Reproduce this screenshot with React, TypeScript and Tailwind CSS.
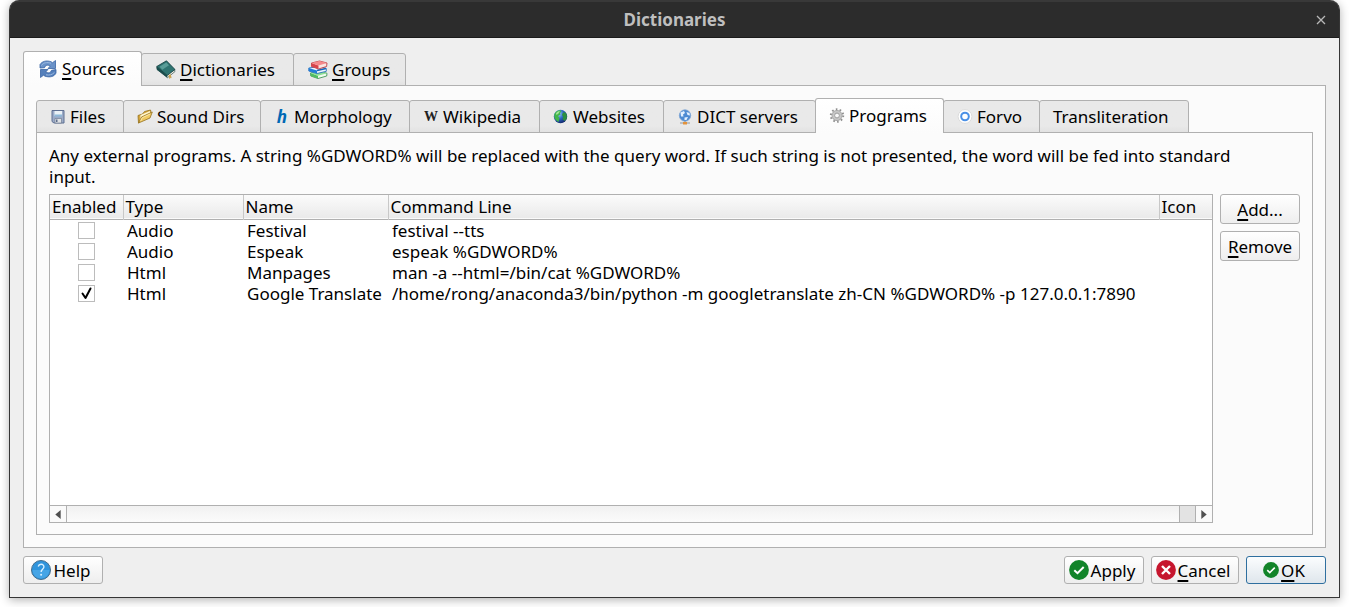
import React, { useState } from 'react';
import clsx from 'clsx';

interface TabItem {
  id: string;
  label: string;
  width: string;
  icon?: React.ReactNode;
  accessKey?: boolean;
}

interface Program {
  enabled: boolean;
  type: string;
  name: string;
  command: string;
}

const SyncIcon = () => (
  <svg viewBox="0 0 20 20" className="w-5 h-5 shrink-0" aria-hidden="true">
    <path d="M2 9V5.500C4 2.500 8 1 13 2.700l1.500 1L17.500 1.500V9.500H10L12.300 7C9.500 5.500 7.500 6 6.500 8.700Z" fill="#6a92c8" stroke="#3a65a5" strokeWidth=".8" />
    <path d="M18 10.500V14c-1.500 3.500-6 4.800-11 3.200l-1.500-1-3 2.300v-8H10L7.700 13c2.800 1.500 4.800 1 5.800-1.700Z" fill="#5580bb" stroke="#3a65a5" strokeWidth=".8" />
    <path d="M3.500 6.500C5.500 3.500 9 3 13 4.200M8 15.800c3 .7 6.500 0 8.500-2.500" fill="none" stroke="#9dbbe2" />
  </svg>
);

const BookIcon = () => (
  <svg viewBox="0 0 20 20" className="w-5 h-5 shrink-0" aria-hidden="true">
    <path d="M.7 7 1 9.500l10.500 8.200 7.500-6.200-.5-2-8 5Z" fill="#f1eee2" stroke="#32504f" strokeWidth=".7" />
    <path d="M.7 6.500 10.500.8 19 9.500l-7.800 6Z" fill="#2f7471" stroke="#123c3d" strokeWidth=".8" />
    <path d="M3.500 6.800 10.300 2.500 13 5.300l-6.700 4.500Z" fill="#5a9d98" />
    <path d="M.7 6.500 1 9.700l10.300 8V15.500Z" fill="#174c4c" />
    <path d="m12.500 15.500 1 3.500 1.200-1.200.9.500-.8-4Z" fill="#c9a14e" />
  </svg>
);

const BooksIcon = () => (
  <svg viewBox="0 0 20 20" className="w-5 h-5 shrink-0" aria-hidden="true">
    <path d="M2.500 13 12 11l7 2.300-.3 2.700-8.700 2.500L2.800 16Z" fill="#effbed" stroke="#2d8a45" strokeWidth=".8" />
    <path d="m2.500 13 7.500 2.800v2.700L2.800 16Z" fill="#4fbd62" />
    <path d="M2.500 13 12 11l7 2.300-9 2.500Z" fill="#8ddf94" />
    <path d="m.8 8 10-1.500 7.500 2v2.800L9 13.500.8 11Z" fill="#edf5ff" stroke="#1764b5" strokeWidth=".8" />
    <path d="m.8 8 8.200 2.500v3L.8 11Z" fill="#217dd8" />
    <path d="m9 10.500 9-2" stroke="#1764b5" strokeWidth="1.500" />
    <path d="m3.500 3 8-2 7.500 2-.4 3.500L10.500 9 3.500 6.500Z" fill="#f9e6e2" stroke="#b92830" strokeWidth=".8" />
    <path d="m3.500 3 7 2.500V9l-7-2.500Z" fill="#d8444b" />
    <path d="m3.500 3 8-2 7.500 2-8.500 2.500Z" fill="#f4898a" />
  </svg>
);

const FloppyIcon = () => (
  <svg viewBox="0 0 16 16" className="w-4 h-4 shrink-0" aria-hidden="true">
    <path d="M2 1.500h12v12.500H4L2 12.500Z" fill="#9cabc8" stroke="#5f7092" />
    <path d="M4.500 2h7.500v5h-7.500Z" fill="#eaf1f6" />
    <path d="M4.500 5.500H12V7.500H4.500Z" fill="#8fb9d8" />
    <path d="M5 9.500h6.500V14H5Z" fill="#dfe2e5" stroke="#66738a" strokeWidth=".6" />
    <path d="M6 10.500h1.500v2.500H6Z" fill="#5d6d8b" />
  </svg>
);

const FolderIcon = () => (
  <svg viewBox="0 0 16 16" className="w-4 h-4 shrink-0" aria-hidden="true">
    <path d="M1.500 14 1 6.500 5.500 5l2-2.500 6-1.500.5 2Z" fill="#d6a73b" stroke="#94701d" strokeWidth=".8" />
    <path d="m3 11.500.5-5.500 9.500-4 .5 3Z" fill="#fff6cf" />
    <path d="m1.500 14 3-6L15.300 3 13 9Z" fill="#efc961" stroke="#94701d" strokeWidth=".8" />
    <path d="m3.700 12 1.500-3.200 8-3.800" fill="none" stroke="#fae8a8" />
  </svg>
);

const GlobeIcon = () => (
  <svg viewBox="0 0 16 16" className="w-4 h-4 shrink-0" aria-hidden="true">
    <defs>
      <radialGradient id="globe" cx=".35" cy=".3" r=".75">
        <stop offset="0" stopColor="#a9d5ff" />
        <stop offset=".5" stopColor="#2c67c4" />
        <stop offset="1" stopColor="#102468" />
      </radialGradient>
    </defs>
    <circle cx="7.500" cy="7.500" r="6.700" fill="url(#globe)" />
    <path d="M1.500 5C2.500 2.500 5 1 7.500 1.200L8.500 2.500 7 4l.5 1.500L5 7l1.500 2L5.500 13C2.500 11.500.5 8.500 1.500 5Z" fill="#42b64b" />
    <path d="m10 3.500 2.500 0c1.500 2 2 4.500.7 7L11.500 12 9.500 10l.8-2L9 6Z" fill="#2b8f3f" />
    <path d="M3 4.500C4 2.500 5.500 2 7 2.200L5.500 4.500 3.500 6Z" fill="#a4e59b" />
  </svg>
);

const ServerGlobeIcon = () => (
  <svg viewBox="0 0 16 16" className="w-4 h-4 shrink-0" aria-hidden="true">
    <circle cx="8" cy="6.500" r="5.700" fill="#4d8bd3" stroke="#7fa6d4" strokeWidth=".8" />
    <path d="M3.500 3.500 7 2l1 2-2 1.500.5 2L4 7.500Zm6-.5L12.500 4l.5 2.500-2.500-.5Zm-2 5.500L11 8l-1.500 3H7.500Z" fill="#e4f1ff" />
    <path d="M8 12.200v2" stroke="#8c8c8c" />
    <path d="M3 14h3M10 14h3" stroke="#adb2b8" strokeWidth="1.500" />
    <path d="M6 13h4v2.500H6Z" fill="#e3933c" />
  </svg>
);

const GearIcon = () => (
  <svg viewBox="0 0 16 16" className="w-4 h-4 shrink-0" aria-hidden="true">
    <circle cx="8" cy="7.500" r="6.200" fill="none" stroke="#8e8e8e" strokeWidth="2" strokeDasharray="1.600 2.295" />
    <circle cx="8" cy="7.500" r="3.900" fill="none" stroke="#c6c6c6" strokeWidth="2.600" />
    <circle cx="8" cy="7.500" r="5.100" fill="none" stroke="#9a9a9a" strokeWidth=".7" />
    <circle cx="8" cy="7.500" r="2.400" fill="#f8f8f8" stroke="#858585" strokeWidth=".8" />
  </svg>
);

const ForvoIcon = () => (
  <svg viewBox="0 0 16 16" className="w-4 h-4 shrink-0" aria-hidden="true">
    <circle cx="8" cy="7.500" r="6.900" fill="#fff" stroke="#dcdcdc" />
    <circle cx="8" cy="7.500" r="3.800" fill="#fff" stroke="#4a90e6" strokeWidth="2" />
  </svg>
);

const LetterH = () => (
  <span aria-hidden="true" className="w-4 shrink-0 text-center font-bold italic text-[#0068b4]">h</span>
);

const LetterW = () => (
  <span aria-hidden="true" className="w-4 shrink-0 text-center font-['Liberation_Serif',serif] text-sm font-bold text-[#222]">W</span>
);

const HelpIcon = () => (
  <svg viewBox="0 0 20 20" className="w-5 h-5 shrink-0" aria-hidden="true">
    <circle cx="10" cy="10" r="9.500" fill="#2f94dc" stroke="#466e8c" />
    <path d="M1.500 10a8.500 8.500 0 0 0 17 0Z" fill="#46a5e6" />
    <path d="M7.200 6.500C7.700 4.800 9 4.200 10.300 4.300c1.700.1 2.700 1.200 2.600 2.700-.1 2.200-2.800 2.400-2.800 5" fill="none" stroke="#d9f0ff" strokeWidth="1.400" />
    <circle cx="10.100" cy="14.700" r="1" fill="#d9f0ff" />
  </svg>
);

const CheckCircle = ({ className }: { className: string }) => (
  <svg viewBox="0 0 20 20" className={className} aria-hidden="true">
    <circle cx="10" cy="10" r="9.900" fill="#12842a" />
    <path d="m5.300 10.200 3.200 3L14.700 7" fill="none" stroke="#fff" strokeWidth="2" />
  </svg>
);

const CrossCircle = () => (
  <svg viewBox="0 0 20 20" className="w-5 h-5 shrink-0" aria-hidden="true">
    <circle cx="10" cy="10" r="9.900" fill="#c6162e" />
    <path d="m6 6 8 8m0-8-8 8" fill="none" stroke="#fff" strokeWidth="2.400" />
  </svg>
);

const sourceTabs: TabItem[] = [
  { id: 'sources', label: 'Sources', width: 'w-[119px]', icon: <SyncIcon />, accessKey: true },
  { id: 'dictionaries', label: 'Dictionaries', width: 'w-[153px]', icon: <BookIcon />, accessKey: true },
  { id: 'groups', label: 'Groups', width: 'w-[113px]', icon: <BooksIcon />, accessKey: true },
];

const kindTabs: TabItem[] = [
  { id: 'files', label: 'Files', width: 'w-[88px]', icon: <FloppyIcon /> },
  { id: 'sound', label: 'Sound Dirs', width: 'w-[138px]', icon: <FolderIcon /> },
  { id: 'morphology', label: 'Morphology', width: 'w-[150px]', icon: <LetterH /> },
  { id: 'wikipedia', label: 'Wikipedia', width: 'w-[131px]', icon: <LetterW /> },
  { id: 'websites', label: 'Websites', width: 'w-[125px]', icon: <GlobeIcon /> },
  { id: 'dict', label: 'DICT servers', width: 'w-[153px]', icon: <ServerGlobeIcon /> },
  { id: 'programs', label: 'Programs', width: 'w-[129px]', icon: <GearIcon /> },
  { id: 'forvo', label: 'Forvo', width: 'w-[97px]', icon: <ForvoIcon /> },
  { id: 'translit', label: 'Transliteration', width: 'w-[150px]' },
];

const initialPrograms: Program[] = [
  { enabled: false, type: 'Audio', name: 'Festival', command: 'festival --tts' },
  { enabled: false, type: 'Audio', name: 'Espeak', command: 'espeak %GDWORD%' },
  { enabled: false, type: 'Html', name: 'Manpages', command: 'man -a --html=/bin/cat %GDWORD%' },
  {
    enabled: true,
    type: 'Html',
    name: 'Google Translate',
    command: '/home/rong/anaconda3/bin/python -m googletranslate zh-CN %GDWORD% -p 127.0.0.1:7890',
  },
];

// Label whose first letter is the keyboard mnemonic
const Mnemonic = ({ text }: { text: string }) => (
  <span>
    <span className="underline decoration-2 underline-offset-3 [text-decoration-skip-ink:none]">{text[0]}</span>
    {text.slice(1)}
  </span>
);

interface TabStripProps {
  tabs: TabItem[];
  active: string;
  onSelect: (id: string) => void;
}

const TabStrip: React.FC<TabStripProps> = ({ tabs, active, onSelect }) => (
  <div role="tablist" className="relative z-10 -mb-px flex h-[35px] shrink-0 items-end">
    {tabs.map((tab) => (
      <button
        key={tab.id}
        role="tab"
        aria-selected={tab.id === active}
        onClick={() => onSelect(tab.id)}
        className={clsx(
          'flex items-center whitespace-nowrap rounded-t-[3px] border border-[#b0b0b0] not-first:-ml-px',
          tab.width,
          tab.accessKey ? 'gap-1 pl-[14px]' : 'gap-1 pl-[13px]',
          tab.id === active
            ? 'relative h-[35px] border-b-0 bg-linear-to-b from-white to-[#fbfbfb] pb-px'
            : 'h-[33px] bg-linear-to-b from-[#e9e9e9] from-80% to-[#e2e2e2]'
        )}
      >
        {tab.icon}
        {tab.accessKey ? <Mnemonic text={tab.label} /> : <span>{tab.label}</span>}
      </button>
    ))}
  </div>
);

const buttonClass =
  'flex items-center justify-center rounded-[3px] border border-[#b0b0b0] bg-linear-to-b from-white to-[#eeeeee] whitespace-nowrap';

export default function App() {
  const [sourceTab, setSourceTab] = useState('sources');
  const [kindTab, setKindTab] = useState('programs');
  const [programs, setPrograms] = useState(initialPrograms);

  const toggle = (index: number) => {
    setPrograms(programs.map((p, i) => (i === index ? { ...p, enabled: !p.enabled } : p)));
  };

  return (
    <div className="flex h-screen flex-col overflow-hidden bg-white px-[9px] pb-[9px] font-['Noto_Sans',sans-serif] text-[17px] leading-[21px] text-black">
      <div className="flex min-h-0 flex-1 flex-col rounded-t-[10px] border border-t-0 border-[#353535] bg-[#efefef] shadow-[0_2px_10px_rgba(0,0,0,0.3)]">
        <header className="grid h-[38px] shrink-0 grid-cols-[1fr_auto_1fr] items-center rounded-t-[9px] border-t-2 border-b border-t-[#393939] border-b-[#1b1b1b] bg-[#2c2c2c] px-3">
          <h1 className="col-start-2 font-bold text-[#bfbfbf]">Dictionaries</h1>
          <button aria-label="Close" className="justify-self-end">
            <svg viewBox="0 0 12 12" className="h-3 w-3" aria-hidden="true">
              <path d="m2 2 8 8m0-8-8 8" stroke="#b8b8b8" strokeWidth="1.300" />
            </svg>
          </button>
        </header>

        <main className="flex min-h-0 flex-1 flex-col p-[13px]">
          <TabStrip tabs={sourceTabs} active={sourceTab} onSelect={setSourceTab} />
          <section className="flex min-h-0 flex-1 flex-col border border-[#b0b0b0] bg-[#fbfbfb] p-3">
            <TabStrip tabs={kindTabs} active={kindTab} onSelect={setKindTab} />
            <div className="flex min-h-0 flex-1 flex-col border border-[#b0b0b0] p-3 pb-[11px]">
              <p className="pr-8">
                Any external programs. A string %GDWORD% will be replaced with the query word. If such string is not
                presented, the word will be fed into standard input.
              </p>
              <div className="mt-[7px] flex min-h-0 flex-1 gap-[7px]">
                <div className="flex min-w-0 flex-1 flex-col border border-[#b0b0b0] bg-white">
                  <div className="min-h-0 flex-1 overflow-hidden">
                    <table className="w-full table-fixed border-collapse text-left whitespace-nowrap">
                      <colgroup>
                        <col className="w-[73px]" />
                        <col className="w-[120px]" />
                        <col className="w-[145px]" />
                        <col />
                        <col className="w-[53px]" />
                      </colgroup>
                      <thead>
                        <tr className="h-6 border-b border-[#b0b0b0] bg-linear-to-b from-[#fbfbfb] to-[#eaeaea]">
                          {['Enabled', 'Type', 'Name', 'Command Line', 'Icon'].map((title) => (
                            <th key={title} className="border-r border-[#c8c8c8] p-0 pl-0.5 font-normal last:border-r-0">
                              {title}
                            </th>
                          ))}
                        </tr>
                      </thead>
                      <tbody>
                        {programs.map((program, index) => (
                          <tr key={program.name} className="h-[21px]">
                            <td className="p-0">
                              <label className="relative mx-auto block h-[17px] w-[17px]">
                                <input
                                  type="checkbox"
                                  aria-label={`Enable ${program.name}`}
                                  checked={program.enabled}
                                  onChange={() => toggle(index)}
                                  className="peer block h-[17px] w-[17px] appearance-none border border-[#bcbcbc] bg-white"
                                />
                                <svg viewBox="0 0 17 17" className="pointer-events-none absolute inset-0 hidden peer-checked:block" aria-hidden="true">
                                  <path d="m4.500 8.500 3 4.500 5-9.500" fill="none" stroke="#000" strokeWidth="2" strokeLinecap="round" strokeLinejoin="round" />
                                </svg>
                              </label>
                            </td>
                            <td className="p-0 pl-1">{program.type}</td>
                            <td className="p-0 pl-1">{program.name}</td>
                            <td className="p-0 pl-1">{program.command}</td>
                            <td className="p-0" />
                          </tr>
                        ))}
                      </tbody>
                    </table>
                  </div>
                  <div className="flex h-[17px] shrink-0 border-t border-[#b0b0b0] bg-linear-to-b from-[#f1f1f1] to-[#fbfbfb]">
                    <button aria-label="Scroll left" className="flex w-[17px] items-center justify-center border-r border-[#b0b0b0] bg-[#fafafa]">
                      <svg viewBox="0 0 6 10" className="h-[9px] w-[6px]" aria-hidden="true">
                        <path d="M6 0v10L0 5Z" fill="#505050" />
                      </svg>
                    </button>
                    <div className="flex flex-1 justify-end">
                      <div className="w-4 border-l border-[#b0b0b0] bg-[#e3e3e3]" />
                    </div>
                    <button aria-label="Scroll right" className="flex w-[17px] items-center justify-center border-l border-[#b0b0b0] bg-[#fafafa]">
                      <svg viewBox="0 0 6 10" className="h-[9px] w-[6px]" aria-hidden="true">
                        <path d="M0 0v10l6-5Z" fill="#505050" />
                      </svg>
                    </button>
                  </div>
                </div>
                <div className="flex w-20 shrink-0 flex-col gap-[7px]">
                  <button className={clsx(buttonClass, 'h-[30px]')}>
                    <Mnemonic text="Add..." />
                  </button>
                  <button className={clsx(buttonClass, 'h-[30px]')}>
                    <Mnemonic text="Remove" />
                  </button>
                </div>
              </div>
            </div>
          </section>

          <footer className="mt-2 flex h-7 shrink-0 gap-[7px]">
            <button className={clsx(buttonClass, 'mr-auto w-20 gap-0.5 pr-1')}>
              <HelpIcon />
              <span>Help</span>
            </button>
            <button className={clsx(buttonClass, 'w-20 gap-0.5 pr-1')}>
              <CheckCircle className="w-5 h-5 shrink-0" />
              <span>Apply</span>
            </button>
            <button className={clsx(buttonClass, 'w-[88px] gap-0.5 pr-1')}>
              <CrossCircle />
              <Mnemonic text="Cancel" />
            </button>
            <button className="flex w-20 items-center justify-center gap-0.5 rounded-[3px] border border-[#2f6f9f] bg-linear-to-b from-[#fbfdfe] to-[#dfe6ec] pr-1 whitespace-nowrap">
              <CheckCircle className="w-4 h-4 shrink-0" />
              <Mnemonic text="OK" />
            </button>
          </footer>
        </main>
      </div>
    </div>
  );
}
